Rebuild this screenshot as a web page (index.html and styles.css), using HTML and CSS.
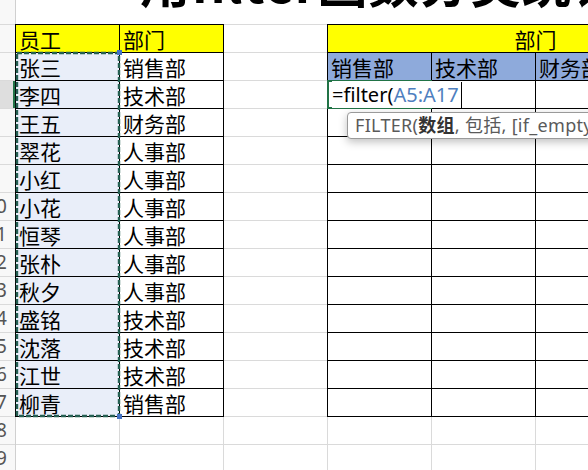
FILE: index.html
```html
<!DOCTYPE html>
<html lang="zh-CN">
<head>
   <meta charset="UTF-8">
   <meta name="viewport" content="width=device-width, initial-scale=1.0">
   <title>FILTER 分类统计</title>
   <link rel="stylesheet" href="styles.css">
</head>
<body>
   <div class="sheet">
       <div class="row-heads">
           <div class="row-head first"></div>
           <div class="row-head"></div>
           <div class="row-head"></div>
           <div class="row-head active"></div>
           <div class="row-head"></div>
           <div class="row-head"></div>
           <div class="row-head"></div>
           <div class="row-head">10</div>
           <div class="row-head">11</div>
           <div class="row-head">12</div>
           <div class="row-head">13</div>
           <div class="row-head">14</div>
           <div class="row-head">15</div>
           <div class="row-head">16</div>
           <div class="row-head">17</div>
           <div class="row-head">18</div>
           <div class="row-head">19</div>
       </div>

       <div class="grid-area">
           <div class="title-row">
               <h1 class="title">用filter函数分类统计</h1>
           </div>

           <div class="tables">
               <!-- 源数据 A4:B17 -->
               <div class="tbl tbl-left">
                   <div class="cell head">员工</div><div class="cell head">部门</div>
                   <div class="cell ref-fill">张三</div><div class="cell">销售部</div>
                   <div class="cell ref-fill">李四</div><div class="cell">技术部</div>
                   <div class="cell ref-fill">王五</div><div class="cell">财务部</div>
                   <div class="cell ref-fill">翠花</div><div class="cell">人事部</div>
                   <div class="cell ref-fill">小红</div><div class="cell">人事部</div>
                   <div class="cell ref-fill">小花</div><div class="cell">人事部</div>
                   <div class="cell ref-fill">恒琴</div><div class="cell">人事部</div>
                   <div class="cell ref-fill">张朴</div><div class="cell">人事部</div>
                   <div class="cell ref-fill">秋夕</div><div class="cell">人事部</div>
                   <div class="cell ref-fill">盛铭</div><div class="cell">技术部</div>
                   <div class="cell ref-fill">沈落</div><div class="cell">技术部</div>
                   <div class="cell ref-fill">江世</div><div class="cell">技术部</div>
                   <div class="cell ref-fill">柳青</div><div class="cell">销售部</div>

                   <!-- 公式引用的 A5:A17 虚线框 -->
                   <div class="ref-range">
                       <svg width="105" height="365" overflow="visible">
                           <rect x="2" y="1" width="102" height="363" fill="none" stroke="#255f52" stroke-width="2.4" stroke-dasharray="5 2"/>
                           <rect x="102" y="-2" width="5" height="5" fill="#4472c4"/>
                           <rect x="102" y="362" width="5" height="5" fill="#4472c4"/>
                       </svg>
                   </div>
               </div>

               <!-- 结果区 D4:G17 -->
               <div class="tbl tbl-right">
                   <div class="cell head merged">部门</div>
                   <div class="cell dept">销售部</div>
                   <div class="cell dept">技术部</div>
                   <div class="cell dept">财务部</div>
                   <div class="cell dept">人事部</div>

                   <div class="cell editing">
                       <span class="editor">=filter(<span class="ref">A5:A17</span><span class="caret"></span></span>
                       <div class="tooltip">FILTER(<b>数组</b>, 包括, [if_empty])</div>
                   </div>
                   <div class="cell"></div><div class="cell"></div><div class="cell"></div>

                   <div class="cell"></div><div class="cell"></div><div class="cell"></div><div class="cell"></div>
                   <div class="cell"></div><div class="cell"></div><div class="cell"></div><div class="cell"></div>
                   <div class="cell"></div><div class="cell"></div><div class="cell"></div><div class="cell"></div>
                   <div class="cell"></div><div class="cell"></div><div class="cell"></div><div class="cell"></div>
                   <div class="cell"></div><div class="cell"></div><div class="cell"></div><div class="cell"></div>
                   <div class="cell"></div><div class="cell"></div><div class="cell"></div><div class="cell"></div>
                   <div class="cell"></div><div class="cell"></div><div class="cell"></div><div class="cell"></div>
                   <div class="cell"></div><div class="cell"></div><div class="cell"></div><div class="cell"></div>
                   <div class="cell"></div><div class="cell"></div><div class="cell"></div><div class="cell"></div>
                   <div class="cell"></div><div class="cell"></div><div class="cell"></div><div class="cell"></div>
                   <div class="cell"></div><div class="cell"></div><div class="cell"></div><div class="cell"></div>
               </div>
           </div>
       </div>
   </div>
</body>
</html>
```

FILE: styles.css
```css
body {
    margin: 0;
    width: 588px;
    height: 470px;
    overflow: hidden;
    background: #fff;
    font-family: "Noto Sans CJK SC", "Noto Sans", sans-serif;
    color: #000;
}

.sheet {
    display: flex;
    width: 1000px;
    height: 470px;
}

/* row numbers, only the right edge is on screen */
.row-heads {
    flex: none;
    width: 16px;
    box-sizing: border-box;
    border-right: 1px solid #d0d0d0;
    background: #f8f8f8;
}

.row-head {
    height: 28px;
    box-sizing: border-box;
    border-top: 1px solid #dadada;
    padding-right: 8px;
    overflow: hidden;
    white-space: nowrap;
    text-align: right;
    direction: rtl;
    font-family: "Noto Sans", sans-serif;
    font-size: 19px;
    line-height: 26px;
    color: #555;
}

.row-head.first {
    height: 24px;
    border-top: none;
}

.row-head.active {
    background: #dedede;
    box-shadow: inset -2px 0 0 #217346;
}

.grid-area {
    flex: none;
    width: 984px;
    background-color: #fff;
    background-image:
        linear-gradient(to right, #dadada 1px, transparent 1px),
        linear-gradient(to bottom, #dadada 1px, transparent 1px);
    background-size: 104px 100%, 100% 28px;
    background-position: 103px 0, 0 24px;
}

.title-row {
    height: 24px;
    background: #fff;
    overflow: hidden;
}

.title {
    margin: -44px 0 0 124px;
    font-size: 50px;
    line-height: 50px;
    font-weight: bold;
    letter-spacing: 1px;
    white-space: nowrap;
}

.tables {
    display: flex;
    align-items: flex-start;
    gap: 103px;
    margin-left: -1px;
}

.tbl {
    display: grid;
    grid-auto-rows: 27px;
    gap: 1px;
    padding: 1px;
    background: #000;
}

.tbl-left {
    position: relative;
    grid-template-columns: repeat(2, 103px);
}

.tbl-right {
    flex: none;
    grid-template-columns: repeat(4, 103px);
}

.cell {
    background: #fff;
    padding: 0 3px;
    font-size: 21px;
    line-height: 28px;
    white-space: nowrap;
    overflow: hidden;
}

.cell.head {
    background: #ffff00;
}

.cell.merged {
    grid-column: 1 / -1;
    text-align: center;
}

.cell.dept {
    background: #8eaadb;
}

.cell.ref-fill {
    background: #e9eef9;
}

.ref-range {
    position: absolute;
    left: 0;
    top: 28px;
    pointer-events: none;
}

.ref-range svg {
    display: block;
}

/* active cell D6, the in-cell editor runs on into E6 */
.cell.editing {
    position: relative;
    z-index: 3;
    overflow: visible;
    box-shadow: 0 0 0 1px #217346, inset 0 0 0 1px #217346;
    padding-left: 4px;
}

.editor {
    display: inline-block;
    height: 27px;
    padding-right: 2px;
    background: #fff;
    font-family: "Noto Sans", "Noto Sans CJK SC", sans-serif;
    font-size: 20px;
    line-height: 28px;
    vertical-align: top;
}

.editor .ref {
    color: #4f7fbf;
}

.caret {
    display: inline-block;
    width: 1px;
    height: 26px;
    margin-left: 2px;
    vertical-align: top;
    margin-top: 1px;
    background: #000;
}

/* function argument hint under the editor */
.tooltip {
    position: absolute;
    left: 19px;
    top: 31px;
    height: 27px;
    box-sizing: border-box;
    padding: 0 7px;
    border: 1px solid #9a9a9a;
    border-radius: 4px;
    background: #fff;
    box-shadow: 0 3px 8px rgba(0, 0, 0, 0.25);
    font-family: "Noto Sans", "Noto Sans CJK SC", sans-serif;
    font-size: 18px;
    letter-spacing: 0.3px;
    line-height: 24px;
    color: #5a5a5a;
    white-space: nowrap;
}

.tooltip b {
    color: #333;
}
```
